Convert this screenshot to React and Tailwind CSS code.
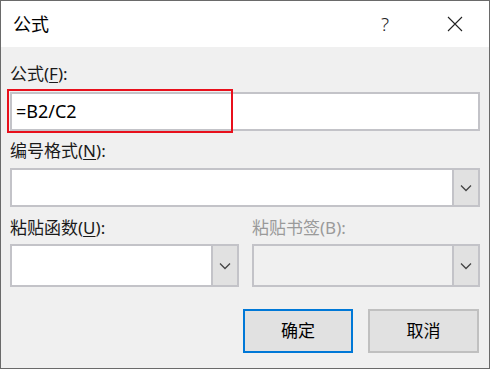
import React from "react";

const font = { fontFamily: '"Noto Sans", "Noto Sans CJK SC", sans-serif' };

function Chevron() {
  return (
    <svg width="12" height="8" viewBox="0 0 12 8" fill="none">
      <path d="M1 1.5 L6 6.5 L11 1.5" stroke="#444" strokeWidth="1.3" />
    </svg>
  );
}

function Select({ disabled, className }) {
  return (
    <div
      className={
        "flex border-2 border-[#c3c3c8] " +
        (disabled ? "bg-[#f0f0f0] " : "bg-white ") +
        className
      }
    >
      <div className="flex-1" />
      <div className="w-[26px] bg-[#e1e1e1] border-l-2 border-[#c3c3c8] flex items-center justify-center">
        <Chevron />
      </div>
    </div>
  );
}

export default function App() {
  return (
    <div
      className="w-[490px] h-[369px] bg-[#f0f0f0] border border-[#6a6a6a] flex flex-col text-[#1a1a1a] overflow-hidden"
      style={font}
    >
      <div className="h-[46px] shrink-0 bg-white flex items-center pl-[12px]">
        <span className="text-[18px] text-black leading-none">公式</span>
        <div className="flex-1" />
        <span className="text-[19px] text-[#222] leading-none mr-[58px] font-light">?</span>
        <svg width="16" height="16" viewBox="0 0 16 16" className="mr-[26px]">
          <path d="M1 1 L15 15 M15 1 L1 15" stroke="#222" strokeWidth="1.1" />
        </svg>
      </div>
      <div className="flex-1 flex flex-col pl-[9px] pr-[9px]">
        <div className="mt-[17px] h-[20px] leading-[20px] text-[17px]">
          公式(<span className="underline underline-offset-2">F</span>):
        </div>
        <div className="relative mt-[8px]">
          <div className="h-[39px] bg-white border-2 border-[#c3c3c8] flex items-center pl-[4px] text-[18px] text-black">
            =B2/C2
          </div>
          <div className="absolute left-[-3px] top-[-3px] w-[226px] h-[44px] border-2 border-[#e8101c]" />
        </div>
        <div className="mt-[10px] h-[20px] leading-[20px] text-[17px]">
          编号格式(<span className="underline underline-offset-2">N</span>):
        </div>
        <Select className="mt-[7px] h-[39px]" />
        <div className="mt-[11px] flex gap-[13px]">
          <div className="w-[229px]">
            <div className="h-[20px] leading-[20px] text-[17px]">
              粘贴函数(<span className="underline underline-offset-2">U</span>):
            </div>
            <Select className="mt-[6px] h-[43px]" />
          </div>
          <div className="flex-1">
            <div className="h-[20px] leading-[20px] text-[17px] text-[#9a9a9a]">粘贴书签(B):</div>
            <Select disabled className="mt-[6px] h-[43px]" />
          </div>
        </div>
        <div className="mt-[22px] flex justify-end gap-[15px] pr-[1px]">
          <button className="w-[110px] h-[44px] bg-[#e1e1e1] border-2 border-[#0078d7] text-[17px] text-black">
            确定
          </button>
          <button className="w-[111px] h-[44px] bg-[#e1e1e1] border-2 border-[#c0c0c0] text-[17px] text-black">
            取消
          </button>
        </div>
      </div>
    </div>
  );
}
